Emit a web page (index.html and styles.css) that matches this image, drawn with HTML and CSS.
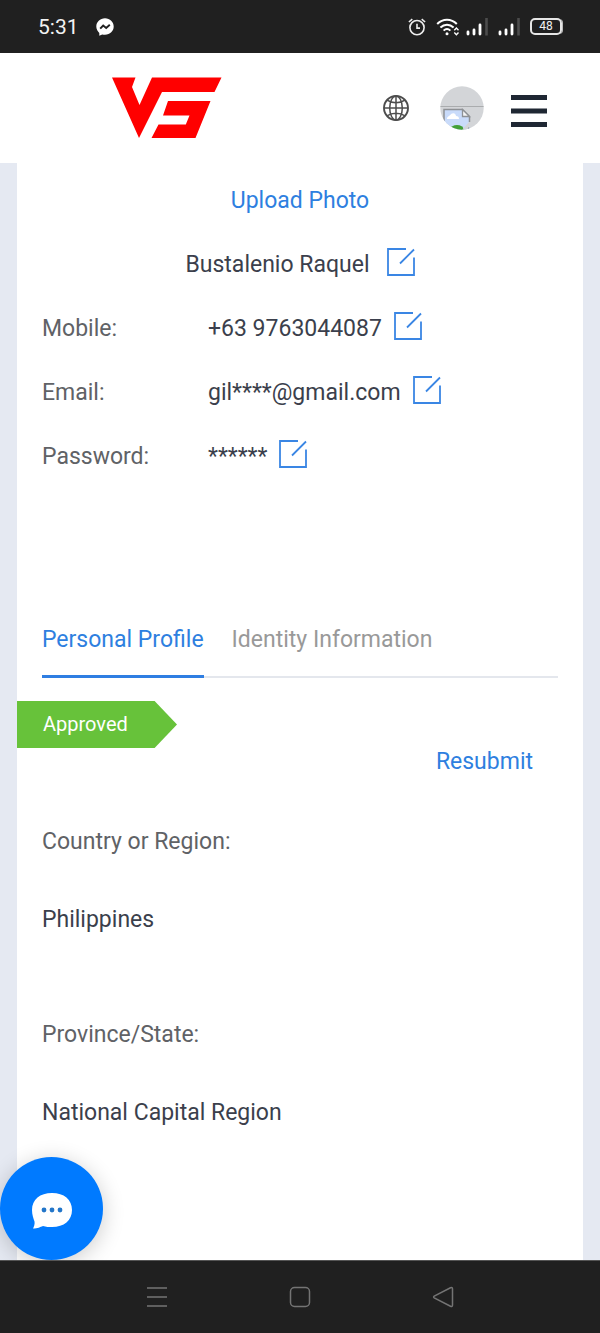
FILE: index.html
```html
<!DOCTYPE html>
<html lang="en">
<head>
<meta charset="utf-8">
<meta name="viewport" content="width=device-width, initial-scale=1">
<title>Personal Profile</title>
<link rel="stylesheet" href="styles.css">
</head>
<body>
<svg class="defs" aria-hidden="true">
  <symbol id="edit" viewBox="0 0 28 28">
    <path d="M19 1H1v26h26V9.500M13 15.500 27 1.500" fill="none" stroke="currentColor" stroke-width="1.8"/>
  </symbol>
</svg>
<div class="status">
  <span class="time">5:31</span>
  <svg class="messenger" width="18" height="18" viewBox="0 0 18 18"><path d="M9 .3C4 .3.300 4 .300 8.600c0 2.600 1.200 4.800 3 6.300v2.800l2.900-1.300c.9.300 1.800.4 2.800.4 5 0 8.700-3.600 8.700-8.200S14 .3 9 .3z" fill="#fff"/><path d="m4.200 10.700 3-3.200 3 2.400 3.600-3.100" fill="none" stroke="#202020" stroke-width="1.900"/></svg>
  <div class="status-icons">
    <svg width="18" height="18" viewBox="0 0 18 18" fill="none" stroke="#eee" stroke-width="1.600"><circle cx="9" cy="9.600" r="7.100"/><path d="M9 5.800v4.300h3M.9 4 4.300 1.200M17.100 4l-3.400-2.800"/></svg>
    <svg class="wifi" width="24" height="18" viewBox="0 0 24 18" fill="none" stroke="#fff" stroke-width="2"><path d="M1.200 6C6.800.2 15.200.2 20.800 6M4.400 9.400c3.900-3.700 9.300-3.700 13.200 0M7.600 12.600c2-1.900 4.800-1.900 6.800 0"/><circle cx="11" cy="15.800" r="1.500" fill="#fff" stroke="none"/><path d="m18.300 12.200 2.100-2.200 2.100 2.200M18.300 14.600l2.100 2.200 2.100-2.200" stroke-width="1.400"/></svg>
    <svg width="22" height="18" viewBox="0 0 22 18"><path d="M2 14v2M8 12v4M14 7v9" stroke="#fff" stroke-width="2.800" stroke-linecap="round"/><path d="M20.500 0v17.500" stroke="#4c4c4c" stroke-width="2.600"/></svg>
    <svg width="22" height="18" viewBox="0 0 22 18"><path d="M2 14v2M8 12v4M14 7v9" stroke="#fff" stroke-width="2.800" stroke-linecap="round"/><path d="M20.500 0v17.500" stroke="#4c4c4c" stroke-width="2.600"/></svg>
    <span class="battery">48</span>
  </div>
</div>

<header class="header">
  <a class="logo" href="#" aria-label="VS home">
    <svg width="110" height="62" viewBox="0 0 110 62" fill="#f00"><path d="M0 .5h23.500L20 10l7.500 18L40 .5h69.500l-7 14.500H50L27 61zM56 24h42.500L83.500 61h-44l7-13.500h27.300l3.700-9H51z"/></svg>
  </a>
  <div class="tools">
    <button class="icon-button" aria-label="Language"><svg width="26" height="26" viewBox="0 0 26 26" fill="none" stroke="#4d4d4d" stroke-width="1.500"><circle cx="13" cy="13" r="12" stroke-width="1.900"/><ellipse cx="13" cy="13" rx="6.300" ry="12"/><path d="M13 1v24M1 13h24M4 5.200c5 3.400 13 3.400 18 0M4 20.800c5-3.400 13-3.400 18 0"/></svg></button>
    <button class="icon-button" aria-label="Account">
      <svg width="44" height="44" viewBox="0 0 44 44"><clipPath id="round"><circle cx="22" cy="22" r="21.700"/></clipPath><g clip-path="url(#round)"><path fill="#d3d5d8" d="M0 0h44v44H0z"/><path d="M0 20.500h44" stroke="#aaacae" stroke-width="1.200"/><path d="M4 23.500h19l7 7V44H4z" fill="#c9dbfa"/><path d="M7 33c0-3 3-3 4-5 3-2 5 0 5 2 2 0 3 1 3 3z" fill="#fff"/><path d="M4 44V23.500h18.500l7 7V36M28.500 44v-3" fill="none" stroke="#8e9195" stroke-width="1.500"/><path d="M22.500 23.500v7h7z" fill="#f4f5f6" stroke="#8e9195" stroke-width="1.300"/><ellipse cx="17" cy="43" rx="6.500" ry="4" fill="#43a038"/><path d="m22 44 7-8h2v3l-5 5z" fill="#d3d5d8"/></g></svg>
    </button>
    <button class="icon-button menu" aria-label="Menu"><svg width="36" height="32" viewBox="0 0 36 32"><path d="M0 2.500h36M0 16h36M0 29.500h36" stroke="#1f2733" stroke-width="5"/></svg></button>
  </div>
</header>

<main class="main">
  <div class="card">
    <div class="row centered"><a class="link" href="#">Upload Photo</a></div>
    <div class="row centered name"><span>Bustalenio Raquel</span><button class="edit" aria-label="Edit name"><svg><use href="#edit"/></svg></button></div>
    <div class="row"><span class="label">Mobile:</span><span>+63 9763044087</span><button class="edit" aria-label="Edit mobile"><svg><use href="#edit"/></svg></button></div>
    <div class="row"><span class="label">Email:</span><span>gil****@gmail.com</span><button class="edit" aria-label="Edit email"><svg><use href="#edit"/></svg></button></div>
    <div class="row"><span class="label">Password:</span><span>******</span><button class="edit" aria-label="Edit password"><svg><use href="#edit"/></svg></button></div>

    <nav class="tabs">
      <button class="tab active">Personal Profile</button>
      <button class="tab">Identity Information</button>
    </nav>

    <div class="ribbon">Approved</div>
    <div class="resubmit"><a class="link" href="#">Resubmit</a></div>

    <dl class="fields">
      <div class="field"><dt>Country or Region:</dt><dd>Philippines</dd></div>
      <div class="field"><dt>Province/State:</dt><dd>National Capital Region</dd></div>
    </dl>
  </div>
  <button class="chat" aria-label="Open chat">
    <svg width="40" height="36" viewBox="0 0 40 36"><path d="M20 0C8 0 0 6.500 0 17c0 5 1.500 8.500 2.500 11.500C3 31 2 33.500 1 35.500c5 0 7-1.500 10-2.500 3 1 6 1 9 1 12 0 20-6.500 20-17S32 0 20 0z" fill="#fff"/><g fill="#2376c9"><circle cx="12" cy="17" r="2.400"/><circle cx="20" cy="17" r="2.400"/><circle cx="28" cy="17" r="2.400"/></g></svg>
  </button>
</main>

<nav class="system" aria-label="System">
  <button class="icon-button" aria-label="Recent apps"><svg width="22" height="22" viewBox="0 0 22 22"><path d="M1 2h20M1 11h20M1 20h20" stroke="#747474" stroke-width="1.500"/></svg></button>
  <button class="icon-button" aria-label="Home"><svg width="22" height="22" viewBox="0 0 22 22"><rect x="1.500" y="1.500" width="19" height="19" rx="4" fill="none" stroke="#747474" stroke-width="1.500"/></svg></button>
  <button class="icon-button" aria-label="Back"><svg width="22" height="22" viewBox="0 0 22 22"><path d="M2.200 10.200 18.500 1.800q2-.8 2 1.200v16q0 2-2 1.200L2.200 11.800q-1.200-.8 0-1.600z" fill="none" stroke="#747474" stroke-width="1.500"/></svg></button>
</nav>
</body>
</html>
```
FILE: styles.css
```css
* { box-sizing: border-box; }

body {
  display: flex;
  flex-direction: column;
  min-height: 100vh;
  margin: 0;
  font: 23px/28px Roboto, sans-serif;
  color: #3b3f4c;
  background: #fff;
}

button {
  padding: 0;
  border: 0;
  background: none;
  font: inherit;
  color: inherit;
  cursor: pointer;
}

svg { display: block; flex: none; }

.defs { position: absolute; width: 0; height: 0; }

.status {
  display: flex;
  align-items: center;
  height: 53px;
  padding: 0 38px;
  background: #202020;
  color: #f2f2f2;
}

.time { font-size: 21px; }
.messenger { margin-left: 17px; }

.status-icons {
  display: flex;
  align-items: center;
  gap: 10px;
  margin-left: auto;
}

.wifi { margin-right: -4px; }

.battery {
  width: 32px;
  height: 17px;
  border: 2px solid #e6e6e6;
  border-radius: 5px;
  font-size: 12px;
  line-height: 13px;
  text-align: center;
  box-shadow: 2px 0 0 -1px #bbb;
}

.header {
  display: flex;
  align-items: center;
  justify-content: space-between;
  height: 110px;
  padding: 0 53px 0 112px;
}

.tools {
  display: flex;
  align-items: center;
  gap: 27px;
}

.tools .icon-button:first-child { margin-right: 4px; }
.menu { padding-top: 5px; }

.main {
  display: flex;
  flex: 1;
  position: relative;
  padding: 0 17px;
  background: #e5e9f2;
}

.card {
  flex: 1;
  padding: 6px 25px 0;
  background: #fff;
}

.row {
  display: flex;
  align-items: center;
  gap: 12px;
  min-height: 64px;
}

.centered { justify-content: center; }
.name { gap: 17px; }

.label {
  width: 154px;
  color: #606266;
}

.link {
  color: #2e7fe0;
  text-decoration: none;
}

.edit {
  margin-bottom: 6px;
  color: #3a86e4;
}

.edit svg { width: 28px; height: 28px; }

.tabs {
  display: flex;
  gap: 28px;
  margin-top: 137px;
  border-bottom: 2px solid #e4e7ed;
}

.tab {
  margin-bottom: -2px;
  padding-bottom: 21px;
  border-bottom: 3px solid transparent;
  color: #999;
}

.tab.active {
  border-color: #2f7ee2;
  color: #2e7fe0;
}

.ribbon {
  width: 160px;
  margin: 23px 0 0 -25px;
  padding-left: 26px;
  background: #67c23a;
  color: #fff;
  font-size: 20px;
  line-height: 47px;
  clip-path: polygon(0 0, 86% 0, 100% 50%, 86% 100%, 0 100%);
}

.resubmit {
  padding-right: 25px;
  text-align: right;
}

.fields {
  display: flex;
  flex-direction: column;
  gap: 87px;
  margin: 52px 0 132px;
}

.field {
  display: flex;
  flex-direction: column;
  gap: 50px;
}

dt { color: #606266; }
dd { margin: 0; }

.chat {
  position: absolute;
  left: 0;
  bottom: 0;
  display: grid;
  place-items: center;
  width: 103px;
  height: 103px;
  padding-top: 4px;
  border-radius: 50%;
  background: #007aff;
  box-shadow: 0 4px 22px rgba(0, 0, 0, 0.2);
}

.system {
  display: flex;
  align-items: center;
  justify-content: space-around;
  position: relative;
  height: 73px;
  padding: 0 85px;
  border-top: 1px solid #555;
  background: #202020;
}
```
